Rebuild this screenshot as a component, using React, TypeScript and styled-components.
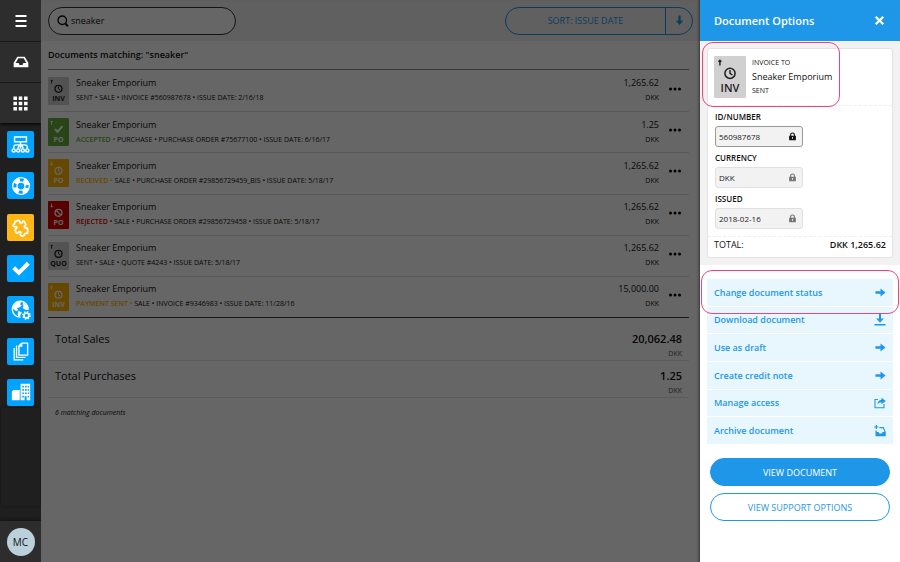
import React from "react";
import styled, { createGlobalStyle } from "styled-components";

const Global = createGlobalStyle`
  * { box-sizing: border-box; }
  body { margin: 0; font-family: "Open Sans", "Noto Sans", sans-serif; color: #111; background: #fff; }
  button, input { font: inherit; color: inherit; }
  button { cursor: pointer; padding: 0; border: 0; background: none; }
  ul, dl, dd, h1, h2, p { margin: 0; padding: 0; font-weight: 400; list-style: none; }
`;

const blue = "#1f97e8";

const Page = styled.div`
  display: flex;
  min-height: 100vh;
`;

/* Sidebar */
const Sidebar = styled.nav`
  flex: 0 0 41px;
  display: flex;
  flex-direction: column;
  background: #1f1f1f;
`;
const TopButtons = styled.div`
  display: flex;
  flex-direction: column;
  box-shadow: 0 1px 3px #000;
`;
const TopButton = styled.button`
  display: grid;
  place-items: center;
  height: 41px;
  background: #2d2d2d;
  color: #fff;
  & + & { border-top: 1px solid #191919; }
`;
const AppList = styled.ul`
  display: grid;
  grid-auto-rows: 1fr;
  place-items: center;
  min-height: 290px;
  padding-top: 1px;
`;
const AppButton = styled.button<{ $accent?: boolean }>`
  display: grid;
  place-items: center;
  width: 27px;
  height: 27px;
  border-radius: 2px;
  color: #fff;
  background: ${(p) => (p.$accent ? "#ffb716" : "#00a4ff")};
`;
const DockEdge = styled.div`
  flex: 1;
  margin: -5px 1px 15px;
  box-shadow: 0 0 2px #111;
`;
const UserArea = styled.div`
  display: grid;
  place-items: center;
  height: 41px;
  background: #2d2d2d;
  box-shadow: 0 -1px 3px #111;
`;
const Avatar = styled.button`
  width: 28px;
  height: 28px;
  border-radius: 50%;
  background: #bad0da;
  font-size: 10px;
`;

/* Main area */
const Main = styled.main`
  position: relative;
  flex: 1;
  min-width: 0;
  background: #fff;
  &::after {
    content: "";
    position: absolute;
    inset: 0;
    background: rgba(0, 0, 0, 0.6);
    box-shadow: inset -3px 0 3px -2px rgba(0, 0, 0, 0.5);
    pointer-events: none;
  }
`;
const Toolbar = styled.header`
  display: flex;
  justify-content: space-between;
  align-items: center;
  height: 41px;
  padding: 0 7px;
  background: #f0f0f0;
`;
const SearchBox = styled.label`
  display: flex;
  align-items: center;
  gap: 2px;
  width: 188px;
  height: 28px;
  padding: 0 8px;
  border: 1px solid #333;
  border-radius: 14px;
  background: #fff;
`;
const SearchInput = styled.input`
  flex: 1;
  min-width: 0;
  padding: 0;
  border: 0;
  outline: 0;
  background: none;
  font-size: 9px;
`;
const SortGroup = styled.div`
  display: flex;
  width: 188px;
  height: 28px;
  border: 1px solid ${blue};
  border-radius: 14px;
  color: ${blue};
  font-size: 9px;
`;
const SortButton = styled.button`
  flex: 1;
`;
const SortDirection = styled.button`
  display: grid;
  place-items: center;
  width: 27px;
  border-left: 1px solid ${blue};
`;
const Content = styled.section`
  padding: 0 11px 0 7px;
`;
const Heading = styled.h2`
  height: 29px;
  line-height: 28px;
  font-size: 9px;
  font-weight: 600;
  border-bottom: 1px solid #888;
`;
const DocList = styled.ul`
  display: grid;
  grid-auto-rows: 1fr;
  min-height: 248px;
  border-bottom: 1px solid #444;
`;
const DocRow = styled.li`
  display: flex;
  align-items: center;
  & + & { border-top: 1px solid #ddd; }
`;
const badgeColors: Record<string, [string, string]> = {
  grey: ["#d0d0d0", "#222"],
  green: ["#66ac3a", "#fff"],
  yellow: ["#ffb400", "#fff"],
  red: ["#d80000", "#fff"],
};
const BadgeBox = styled.span<{ $tone: string; $large?: boolean }>`
  display: flex;
  flex-direction: column;
  flex: none;
  align-items: center;
  justify-content: flex-end;
  width: ${(p) => (p.$large ? 32 : 21)}px;
  height: ${(p) => (p.$large ? 42 : 28)}px;
  padding-bottom: ${(p) => (p.$large ? 4 : 2)}px;
  border-radius: 1px;
  background: ${(p) => badgeColors[p.$tone][0]};
  color: ${(p) => badgeColors[p.$tone][1]};
  font-size: ${(p) => (p.$large ? 11 : 7)}px;
  line-height: ${(p) => (p.$large ? 13 : 9)}px;
  font-weight: ${(p) => (p.$large ? 600 : 700)};
`;
const DocText = styled.div`
  flex: 1;
  padding-left: 7px;
`;
const DocName = styled.p`
  font-size: 9px;
  line-height: 14px;
`;
const DocMeta = styled.p`
  padding-top: 1px;
  font-size: 7px;
  line-height: 14px;
`;
const Status = styled.span<{ $tone: string }>`
  font-weight: ${(p) => (p.$tone === "grey" ? 400 : 600)};
  color: ${(p) => (p.$tone === "grey" ? "#111" : badgeColors[p.$tone][0])};
`;
const Amount = styled.div`
  text-align: right;
`;
const MoreButton = styled.button`
  display: grid;
  place-items: center;
  width: 30px;
  height: 28px;
  padding: 0 0 4px 2px;
`;
const Totals = styled.dl`
  padding-top: 6px;
  font-size: 11px;
`;
const TotalRow = styled.div`
  display: flex;
  justify-content: space-between;
  height: 37px;
  padding: 6px 7px 0;
  border-bottom: 1px solid #e4e4e4;
  line-height: 18px;
`;
const TotalLabel = styled.dt`
  font-size: 11px;
`;
const TotalValue = styled.dd`
  text-align: right;
  font-weight: 600;
`;
const TotalCurrency = styled.small`
  display: block;
  font-size: 7px;
  line-height: 12px;
  font-weight: 400;
  color: #555;
`;
const Count = styled.p`
  padding: 10px 7px;
  font-size: 7px;
  line-height: 10px;
  font-style: italic;
`;

/* Side panel */
const Panel = styled.aside`
  flex: 0 0 200px;
  background: #fff;
`;
const PanelHeader = styled.header`
  display: flex;
  align-items: center;
  justify-content: space-between;
  height: 41px;
  padding: 0 14px;
  background: ${blue};
  color: #fff;
`;
const PanelTitle = styled.h1`
  font-size: 11px;
  font-weight: 600;
`;
const CloseButton = styled.button`
  display: grid;
  place-items: center;
  width: 13px;
  height: 13px;
`;
const Summary = styled.section`
  padding: 7px;
  background: #f2f2f2;
`;
const Card = styled.div`
  border: 1px solid #e4e4e4;
  border-radius: 3px;
  background: #fff;
`;
const CardHead = styled.div`
  position: relative;
  display: flex;
  gap: 6px;
  height: 57px;
  padding: 7px 6px;
  border-bottom: 1px dashed #eee;
`;
const Highlight = styled.span<{ $wide?: boolean }>`
  position: absolute;
  inset: ${(p) => (p.$wide ? "-9px -6px auto -6px" : "-7px auto auto -6px")};
  width: ${(p) => (p.$wide ? "auto" : "138px")};
  height: ${(p) => (p.$wide ? 44 : 65)}px;
  border: 1px solid #ee4479;
  border-radius: 11px;
  pointer-events: none;
`;
const Party = styled.div`
  font-size: 7px;
  line-height: 14px;
`;
const PartyName = styled.p`
  font-size: 9px;
  line-height: 14px;
`;
const Fields = styled.div`
  display: grid;
  grid-auto-rows: 1fr;
  min-height: 130px;
  padding: 3px 7px 4px;
`;
const FieldLabel = styled.label`
  display: block;
  font-size: 8px;
  line-height: 16px;
  font-weight: 600;
`;
const FieldBox = styled.div<{ $active?: boolean }>`
  display: flex;
  align-items: center;
  width: 88px;
  height: 21px;
  margin-top: 1px;
  padding: 0 5px 0 3px;
  border: 1px solid ${(p) => (p.$active ? "#999" : "#e0e0e0")};
  border-radius: 3px;
  background: #f2f2f2;
  color: ${(p) => (p.$active ? "#111" : "#777")};
`;
const FieldInput = styled.input`
  flex: 1;
  min-width: 0;
  padding: 0;
  border: 0;
  outline: 0;
  background: none;
  color: #222;
  font-size: 8px;
`;
const TotalLine = styled.div`
  display: flex;
  justify-content: space-between;
  padding: 0 6px 4px;
  border-top: 1px dashed #eee;
  font-size: 9px;
  line-height: 16px;
`;
const Strong = styled.b`
  font-weight: 600;
`;
const Actions = styled.ul`
  position: relative;
  display: grid;
  grid-auto-rows: 1fr;
  gap: 1px;
  min-height: 165px;
  margin: 14px 7px;
`;
const ActionButton = styled.button`
  display: flex;
  align-items: center;
  justify-content: space-between;
  width: 100%;
  height: 100%;
  padding: 0 7px;
  background: #e8f6fd;
  color: ${blue};
  font-size: 9px;
  font-weight: 600;
`;
const PanelFooter = styled.footer`
  display: grid;
  gap: 7px;
  padding: 0 10px 14px;
`;
const PillButton = styled.button<{ $filled?: boolean }>`
  height: 28px;
  border: 1px solid ${blue};
  border-radius: 14px;
  background: ${(p) => (p.$filled ? blue : "#fff")};
  color: ${(p) => (p.$filled ? "#fff" : blue)};
  font-size: 9px;
`;

const icons = {
  menu: <path d="M1 0h22v4H1zM1 10h22v4H1zM1 20h22v4H1z" />,
  inbox: <path fillRule="evenodd" d="M6.500 4h11L23 13v7H1v-7zM8 6.500 4 13.500h4.500l1.200 3h4.600l1.200-3H20L16 6.500z" />,
  grid: (
    <path d="M2 2h5v5H2zM9.500 2h5v5h-5zM17 2h5v5h-5zM2 9.500h5v5H2zM9.500 9.500h5v5h-5zM17 9.500h5v5h-5zM2 17h5v5H2zM9.500 17h5v5h-5zM17 17h5v5h-5z" />
  ),
  network: (
    <g fill="none" stroke="currentColor" strokeWidth="1.800">
      <path d="M4.500 2.500h15v6h-15zM12 8.500v8.500M3.400 17v-1.500c0-2 1-3 3-3h11.200c2 0 3 1 3 3V17M9 17c0-2.500 1-4 3-4.500 2 .5 3 2 3 4.500" />
      <circle cx="3.400" cy="19.500" r="2" /><circle cx="9.100" cy="19.500" r="2" /><circle cx="14.900" cy="19.500" r="2" /><circle cx="20.600" cy="19.500" r="2" />
    </g>
  ),
  buoy: (
    <g fill="none" stroke="currentColor">
      <circle cx="12" cy="12" r="10" strokeWidth="1.500" />
      <circle cx="12" cy="12" r="4.800" strokeWidth="1.500" />
      <circle cx="12" cy="12" r="7.500" strokeWidth="6" strokeDasharray="6.900 4.880" strokeDashoffset="-2.440" />
    </g>
  ),
  puzzle: (
    <path
      fill="none" stroke="currentColor" strokeWidth="2.200" strokeLinejoin="round"
      d="M5 4.500 9.500 3c1.500-.3 1.500 1 1.500 2 .3 2 3 1.500 3.500 0 .5-1.500 2-1.200 2.700.2l1.300 3c.3 1.300-.5 1.500-1.200 2.200-.8 1.500.4 2.800 2 2.300 1.200-.3 1.700.3 1.700 1.300v4c0 1.500-1.500 1.500-2.500 1.300-1.500 0-1.500 1-1.500 2-.5 1.700-4 2-5 .5-.8-1.500.5-2 .5-3.300-.3-1.500-2.500-1.500-3.300-.2-.7 1.500-2.200 1-2.700 0l-1.200-3c-.3-1.300 1-1.500 1.700-2.300.8-1.500-.5-2.500-2-2.200C3.500 11 2.500 10.500 2.700 9c.3-1 1.500-1 2-2z"
    />
  ),
  check: <path d="M1.500 13.500 5 10l4.500 4.500L19 4.500 22.500 8 9.500 21z" />,
  globe: (
    <>
      <path fill="none" stroke="currentColor" strokeWidth="1.600" d="M11.500 20.500A9.500 9.500 0 1 1 20.500 12" />
      <path d="M3 6 8 2l4 .5-1 3 2 1-3 2.500-3 .5 1.500 2.500-2 1.500L3 11 1.500 9zM9 13l4 2-2 4-2 1-1-3zM15 3l4 4 .8 5-3.300-.5-2.500-2 1-2.500-1-2z" />
      <circle cx="18.500" cy="18.500" r="2.900" fill="none" stroke="currentColor" strokeWidth="1.900" />
      <circle cx="18.500" cy="18.500" r="4.400" fill="none" stroke="currentColor" strokeWidth="1.700" strokeDasharray="1.720 1.730" />
    </>
  ),
  copies: (
    <g fill="none" stroke="currentColor" strokeWidth="1.700">
      <path d="M13.500 1.500H21v15H10V5zM13.500 1.500V5H10M7 4.500v15h11.500M4 7.500v15h11.500" />
    </g>
  ),
  building: (
    <path fillRule="evenodd" d="M1 11.500 3 9.500h7.500V22H1zM11.500 2H23v20H11.500zM13.500 4.500v2h2v-2zM16.800 4.500v2h2v-2zM20 4.500v2h1.500v-2zM13.500 8.500v2h2v-2zM16.800 8.500v2h2v-2zM20 8.500v2h1.500v-2zM13.500 12.500v2h2v-2zM16.800 12.500v2h2v-2zM20 12.500v2h1.500v-2zM13.500 16.500v2h2v-2zM20 16.500v2h1.500v-2zM16.300 17v5h2.500v-5z" />
  ),
  search: (
    <g fill="none" stroke="currentColor" strokeWidth="2.600">
      <circle cx="10.500" cy="10.500" r="8.500" /><path d="m16 16.500 6 6" strokeWidth="3.800" />
    </g>
  ),
  down: <path d="M9.500 1h5v11.500H20L12 22l-8-9.500h5.500z" />,
  right: <path d="M1 9.500h11V3.500l11 8.500-11 8.500v-6H1z" />,
  close: <path d="m2 5.500 3.500-3.500L12 8.500 18.500 2 22 5.500 15.500 12l6.500 6.500-3.500 3.500-6.500-6.500L5.500 22 2 18.500 8.500 12z" />,
  lock: <path fillRule="evenodd" d="M3 10h2.500V7.500a6.500 6.500 0 0 1 13 0V10H21v12H3zM8.500 10h7V7.500a3.500 3.500 0 0 0-7 0zM10.800 13v5h2.400v-5z" />,
  download: <path d="M10 0h4v9h5.500L12 17.500 4.500 9H10zM1 20h22v3H1z" />,
  share: (
    <>
      <path fill="none" stroke="currentColor" strokeWidth="2.200" d="M8 5H2v16.500h18V14" />
      <path d="M15 1.500 23.500 8 15 14.500v-4c-4 0-6 1.500-8 5 0-6 3-9.500 8-10z" />
    </>
  ),
  archive: (
    <path fillRule="evenodd" d="M3.500 0h2.500v3h3v2.200H6v3H3.500v-3h-3V3h3zM11 4h8.500L23.500 14v8.500H3V11h2.500v3H9l1.500 3h5l1.500-3h4L18 6.500h-7z" />
  ),
};
type IconName = keyof typeof icons;
const Icon = ({ name, size }: { name: IconName; size: number }) => (
  <svg width={size} height={size} viewBox="0 0 24 24" fill="currentColor" aria-hidden="true">
    {icons[name]}
  </svg>
);

type Mark = "clock" | "check" | "ban";
const Badge = ({ tone, code, mark, up, large }: { tone: string; code: string; mark: Mark; up?: boolean; large?: boolean }) => (
  <BadgeBox $tone={tone} $large={large}>
    <svg width={large ? 32 : 21} height={large ? 26 : 17} viewBox="0 0 32 26" fill="none" stroke="currentColor" aria-hidden="true">
      <path d={up ? "M5.500 4.500V10M4 6l1.500-1.500L7 6" : "M5.500 4v5.500M4 8l1.500 1.500L7 8"} strokeWidth="1.500" />
      {mark === "check" ? (
        <path d="m10.500 17 4 4 7.500-8.500" strokeWidth="3.200" />
      ) : (
        <>
          <circle cx="16" cy="18" r="5.300" strokeWidth={large ? 1.6 : 2} />
          {mark === "clock" ? <path d="M16 14.500V18l2.500 1.800" strokeWidth="1.500" /> : <path d="m12.300 14.300 7.400 7.400" strokeWidth="2" />}
        </>
      )}
    </svg>
    {code}
  </BadgeBox>
);

const docs: { tone: string; code: string; mark: Mark; up?: boolean; status: string; meta: string; amount: string }[] = [
  { tone: "grey", code: "INV", mark: "clock", up: true, status: "SENT", meta: "SALE • INVOICE #560987678 • ISSUE DATE: 2/16/18", amount: "1,265.62" },
  { tone: "green", code: "PO", mark: "check", up: true, status: "ACCEPTED", meta: "PURCHASE • PURCHASE ORDER #75677100 • ISSUE DATE: 6/16/17", amount: "1.25" },
  { tone: "yellow", code: "PO", mark: "clock", status: "RECEIVED", meta: "SALE • PURCHASE ORDER #29856729459_BIS • ISSUE DATE: 5/18/17", amount: "1,265.62" },
  { tone: "red", code: "PO", mark: "ban", status: "REJECTED", meta: "SALE • PURCHASE ORDER #29856729458 • ISSUE DATE: 5/18/17", amount: "1,265.62" },
  { tone: "grey", code: "QUO", mark: "clock", up: true, status: "SENT", meta: "SALE • QUOTE #4243 • ISSUE DATE: 5/18/17", amount: "1,265.62" },
  { tone: "yellow", code: "INV", mark: "clock", up: true, status: "PAYMENT SENT", meta: "SALE • INVOICE #9346983 • ISSUE DATE: 11/28/16", amount: "15,000.00" },
];

const apps: [string, IconName, number][] = [
  ["Network", "network", 19], ["Support", "buoy", 20], ["Apps", "puzzle", 19], ["Tasks", "check", 20],
  ["Settings", "globe", 20], ["Documents", "copies", 19], ["Company", "building", 20],
];

const fields = [
  { id: "number", label: "ID/NUMBER", value: "560987678" },
  { id: "currency", label: "CURRENCY", value: "DKK" },
  { id: "issued", label: "ISSUED", value: "2018-02-16" },
];

const actions: [string, IconName][] = [
  ["Change document status", "right"], ["Download document", "download"], ["Use as draft", "right"],
  ["Create credit note", "right"], ["Manage access", "share"], ["Archive document", "archive"],
];

const totals = [["Total Sales", "20,062.48"], ["Total Purchases", "1.25"]];

export default function App() {
  return (
    <Page>
      <Global />
      <Sidebar aria-label="Applications">
        <TopButtons>
          <TopButton aria-label="Menu"><Icon name="menu" size={12} /></TopButton>
          <TopButton aria-label="Inbox"><Icon name="inbox" size={16} /></TopButton>
          <TopButton aria-label="All apps"><Icon name="grid" size={17} /></TopButton>
        </TopButtons>
        <AppList>
          {apps.map(([label, icon, size]) => (
            <li key={label}>
              <AppButton aria-label={label} $accent={icon === "puzzle"}><Icon name={icon} size={size} /></AppButton>
            </li>
          ))}
        </AppList>
        <DockEdge />
        <UserArea><Avatar>MC</Avatar></UserArea>
      </Sidebar>

      <Main>
        <Toolbar>
          <SearchBox>
            <Icon name="search" size={12} />
            <SearchInput aria-label="Search documents" defaultValue="sneaker" />
          </SearchBox>
          <SortGroup>
            <SortButton>SORT: ISSUE DATE</SortButton>
            <SortDirection aria-label="Descending"><Icon name="down" size={11} /></SortDirection>
          </SortGroup>
        </Toolbar>
        <Content>
          <Heading>Documents matching: "sneaker"</Heading>
          <DocList>
            {docs.map((d, i) => (
              <DocRow key={i}>
                <Badge tone={d.tone} code={d.code} mark={d.mark} up={d.up} />
                <DocText>
                  <DocName>Sneaker Emporium</DocName>
                  <DocMeta><Status $tone={d.tone}>{d.status} •</Status> {d.meta}</DocMeta>
                </DocText>
                <Amount>
                  <DocName>{d.amount}</DocName>
                  <DocMeta>DKK</DocMeta>
                </Amount>
                <MoreButton aria-label="More options">
                  <svg width="12" height="4" viewBox="0 0 12 4" aria-hidden="true"><circle cx="1.500" cy="2" r="1.500" /><circle cx="6" cy="2" r="1.500" /><circle cx="10.500" cy="2" r="1.500" /></svg>
                </MoreButton>
              </DocRow>
            ))}
          </DocList>
          <Totals>
            {totals.map(([label, value]) => (
              <TotalRow key={label}>
                <TotalLabel>{label}</TotalLabel>
                <TotalValue>{value}<TotalCurrency>DKK</TotalCurrency></TotalValue>
              </TotalRow>
            ))}
          </Totals>
          <Count>6 matching documents</Count>
        </Content>
      </Main>

      <Panel>
        <PanelHeader>
          <PanelTitle>Document Options</PanelTitle>
          <CloseButton aria-label="Close"><Icon name="close" size={11} /></CloseButton>
        </PanelHeader>
        <Summary>
          <Card>
            <CardHead>
              <Badge tone="grey" code="INV" mark="clock" up large />
              <Party>
                <p>INVOICE TO</p>
                <PartyName>Sneaker Emporium</PartyName>
                <p>SENT</p>
              </Party>
              <Highlight />
            </CardHead>
            <Fields>
              {fields.map((f, i) => (
                <div key={f.id}>
                  <FieldLabel htmlFor={f.id}>{f.label}</FieldLabel>
                  <FieldBox $active={i === 0}>
                    <FieldInput id={f.id} readOnly value={f.value} />
                    <Icon name="lock" size={9} />
                  </FieldBox>
                </div>
              ))}
            </Fields>
            <TotalLine><span>TOTAL:</span><Strong>DKK 1,265.62</Strong></TotalLine>
          </Card>
        </Summary>
        <Actions>
          {actions.map(([label, icon]) => (
            <li key={label}>
              <ActionButton>{label}<Icon name={icon} size={icon === "right" ? 11 : 12} /></ActionButton>
            </li>
          ))}
          <Highlight as="li" $wide />
        </Actions>
        <PanelFooter>
          <PillButton $filled>VIEW DOCUMENT</PillButton>
          <PillButton>VIEW SUPPORT OPTIONS</PillButton>
        </PanelFooter>
      </Panel>
    </Page>
  );
}
